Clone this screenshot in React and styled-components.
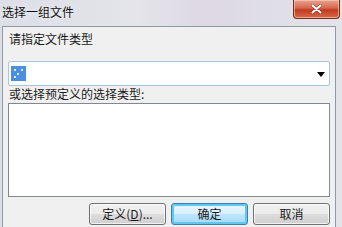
import React from "react";
import styled, { createGlobalStyle } from "styled-components";

const Global = createGlobalStyle`
  html, body { margin: 0; padding: 0; background: #dfe2e8; }
  body { font-family: "Noto Sans CJK SC", "Liberation Sans", sans-serif; font-size: 12px; color: #000; }
`;

function CloseIcon() {
  return (
    <svg width="11" height="10" viewBox="0 0 11 10">
      <path d="M1.5 1.5 L9.5 8.5 M9.5 1.5 L1.5 8.5" stroke="#3b1a18" strokeWidth="3.2" strokeLinecap="round" opacity="0.45" />
      <path d="M1.5 1.5 L9.5 8.5 M9.5 1.5 L1.5 8.5" stroke="#fff" strokeWidth="2" strokeLinecap="round" />
    </svg>
  );
}

function FileTypeIcon() {
  return (
    <svg width="15" height="15" viewBox="0 0 15 15">
      <rect x="0" y="0" width="15" height="15" fill="#4a8fe0" />
      <rect x="3" y="3" width="2" height="2" fill="#d8e8ff" />
      <rect x="10" y="3" width="2" height="2" fill="#d8e8ff" />
      <rect x="6" y="7" width="2" height="2" fill="#d8e8ff" />
      <rect x="3" y="10" width="2" height="2" fill="#d8e8ff" />
    </svg>
  );
}

export default function App() {
  return (
    <>
      <Global />
      <Window>
        <TitleBar>
          <Title>选择一组文件</Title>
          <CloseButton>
            <CloseIcon />
          </CloseButton>
        </TitleBar>
        <Panel>
          <Label>请指定文件类型</Label>
          <Combo>
            <FileTypeIcon />
            <Arrow />
          </Combo>
          <Label $tight>或选择预定义的选择类型:</Label>
          <ListBox />
          <ButtonRow>
            <Button>定义(<u>D</u>)...</Button>
            <Button $primary>确定</Button>
            <Button>取消</Button>
          </ButtonRow>
        </Panel>
      </Window>
    </>
  );
}

const Window = styled.div`
  width: 342px;
  height: 227px;
  overflow: hidden;
  display: flex;
  flex-direction: column;
  background: linear-gradient(90deg, #dcdfe6 0%, #e4e4ea 40%, #ddd8e2 60%, #e2e4ea 100%);
  box-sizing: border-box;
  padding: 0 6px 0 2px;
`;

const TitleBar = styled.div`
  height: 26px;
  flex: none;
  display: flex;
  align-items: flex-start;
  justify-content: space-between;
`;

const Title = styled.div`
  padding-top: 3px;
  font-size: 12px;
  line-height: 17px;
  color: #111;
  text-shadow: 0 0 6px rgba(255, 255, 255, 0.9);
`;

const CloseButton = styled.div`
  width: 47px;
  height: 19px;
  margin-right: -4px;
  box-sizing: border-box;
  border: 1px solid #7a2a1e;
  border-top: none;
  border-radius: 0 0 4px 4px;
  background: linear-gradient(180deg, #e8a491 0%, #d4684e 45%, #c33a1f 55%, #d86a4a 100%);
  box-shadow: inset 0 0 0 1px rgba(255, 210, 190, 0.6);
  display: flex;
  align-items: center;
  justify-content: center;
`;

const Panel = styled.div`
  flex: 1;
  background: #f0f0f0;
  border: 1px solid #8f9aa7;
  border-bottom: none;
  padding: 4px 5px 0 5px;
  display: flex;
  flex-direction: column;
`;

const Label = styled.div`
  font-size: 12px;
  line-height: 16px;
  margin-left: 1px;
  color: #1a1a1a;
  margin-bottom: ${(p) => (p.$tight ? "1px" : "14px")};
`;

const Combo = styled.div`
  height: 25px;
  box-sizing: border-box;
  border: 1px solid #a9c4df;
  border-radius: 2px;
  background: #fff;
  display: flex;
  align-items: center;
  justify-content: space-between;
  padding: 0 4px 0 2px;
`;

const Arrow = styled.div`
  width: 0;
  height: 0;
  border-left: 4px solid transparent;
  border-right: 4px solid transparent;
  border-top: 5px solid #000;
  margin-top: 2px;
`;

const ListBox = styled.div`
  height: 94px;
  box-sizing: border-box;
  border: 1px solid #828790;
  background: #fff;
`;

const ButtonRow = styled.div`
  display: flex;
  justify-content: flex-end;
  gap: 5px;
  margin-top: 6px;
`;

const Button = styled.div`
  width: 77px;
  height: 22px;
  box-sizing: border-box;
  border: 1px solid ${(p) => (p.$primary ? "#3c7fb1" : "#707070")};
  border-radius: 3px;
  background: ${(p) =>
    p.$primary
      ? "linear-gradient(180deg, #eaf6fd 0%, #d9f0fc 48%, #bee6fd 52%, #a7d9f5 100%)"
      : "linear-gradient(180deg, #f2f2f2 0%, #ebebeb 48%, #dddddd 52%, #cfcfcf 100%)"};
  box-shadow: inset 0 0 0 ${(p) => (p.$primary ? "2px #5fc8f0" : "1px rgba(255,255,255,0.7)")};
  display: flex;
  align-items: center;
  justify-content: center;
  font-size: 12px;
  line-height: 14px;
  color: #1a1a1a;
  u { text-decoration: underline; }
`;
